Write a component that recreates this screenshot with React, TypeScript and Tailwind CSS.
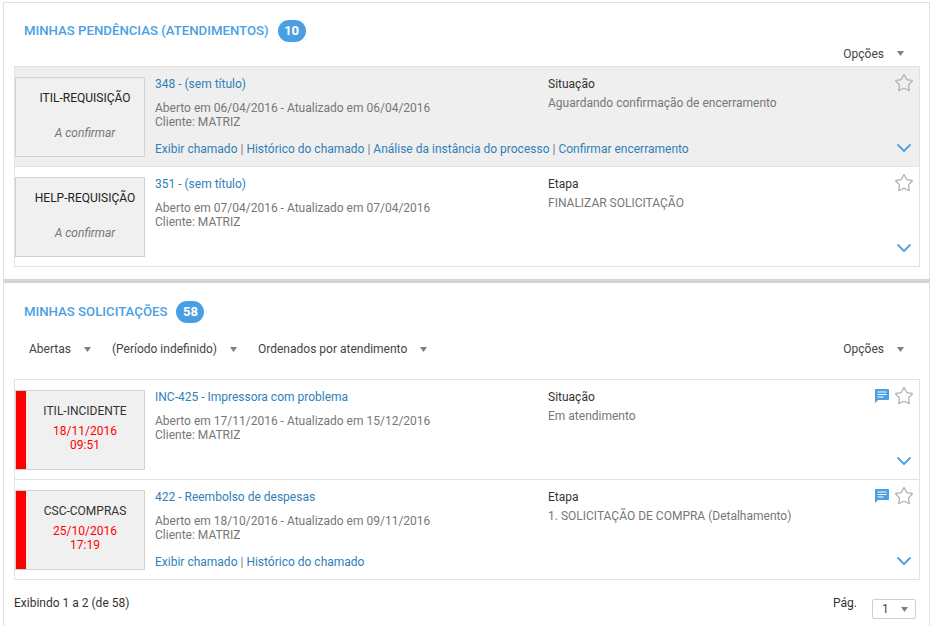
import React from 'react';
import { Star, ChevronDown } from 'lucide-react';

const Caret = () => (
  <svg width="7" height="5" viewBox="0 0 7 5" className="shrink-0">
    <path d="M0 0h7L3.5 5z" fill="#808080" />
  </svg>
);

const Comment = () => (
  <svg width="14" height="14" viewBox="0 0 14 14" className="shrink-0">
    <path d="M0.8 0h12.4a0.8 0.8 0 0 1 0.8 0.8v9.4a0.8 0.8 0 0 1-0.8 0.8H3L0 14V0.8A0.8 0.8 0 0 1 0.8 0z" fill="#4a9fe3" />
    <path d="M2.5 2.5h9v1h-9zM2.5 5h9v1h-9zM2.5 7.5h6v1h-6z" fill="#fff" />
  </svg>
);

const Dropdown = ({ label }: { label: string }) => (
  <div className="flex items-center gap-[13px] text-[#444]">
    <span>{label}</span>
    <Caret />
  </div>
);

type Item = {
  type: string;
  status?: string;
  date?: string;
  time?: string;
  title: string;
  opened: string;
  updated: string;
  label: string;
  value: string;
  links?: string[];
  comment?: boolean;
  highlight?: boolean;
};

const Row = ({ item, last }: { item: Item; last?: boolean }) => (
  <div className={`flex ${item.highlight ? 'bg-[#efefef]' : 'bg-white'} ${last ? 'h-[99px]' : 'h-[100px] border-b border-[#e2e2e2]'}`}>
    <div className="pt-[10px] shrink-0">
      <div className="flex w-[130px] h-[80px] border border-[#d2d2d2] bg-[#f0f0f0]">
        {item.date && <div className="w-[10px] bg-[#ff0000] shrink-0" />}
        <div className={`flex-1 flex flex-col items-center ${item.date ? '' : 'pl-[10px]'}`}>
          {item.date ? (
            <>
              <div className="mt-[12px] text-[#333] leading-[16px]">{item.type}</div>
              <div className="mt-[5px] text-[#ff0000] leading-[14px] text-center">
                {item.date}
                <br />
                {item.time}
              </div>
            </>
          ) : (
            <>
              <div className="mt-[12px] text-[#222] leading-[16px]">{item.type}</div>
              <div className="mt-[19px] text-[#777] italic leading-[16px]">{item.status}</div>
            </>
          )}
        </div>
      </div>
    </div>
    <div className="w-[403px] shrink-0 pl-[10px] flex flex-col pt-[9px]">
      <a className="text-[#2f7fb8] leading-[16px]">{item.title}</a>
      <div className="mt-[9px] text-[#777] leading-[14px]">
        Aberto em {item.opened} - Atualizado em {item.updated}
        <br />
        Cliente: MATRIZ
      </div>
      {item.links && (
        <div className="mt-[12px] text-[#2f7fb8] leading-[16px] whitespace-nowrap">
          {item.links.map((l, i) => (
            <span key={l}>
              {i > 0 && <span className="text-[#777]"> | </span>}
              {l}
            </span>
          ))}
        </div>
      )}
    </div>
    <div className="flex-1 pt-[9px]">
      <div className="text-[#333] leading-[16px]">{item.label}</div>
      <div className="mt-[3px] text-[#777] leading-[16px]">{item.value}</div>
    </div>
    <div className="w-[60px] shrink-0 flex flex-col items-end pr-[5px] pt-[6px] pb-[6px] justify-between">
      <div className="flex items-center gap-[5px]">
        {item.comment && <Comment />}
        <Star size={20} strokeWidth={1.5} color="#b0b0b0" />
      </div>
      <ChevronDown size={24} strokeWidth={1.8} color="#4a9fe3" className="mr-[-2px]" />
    </div>
  </div>
);

const Heading = ({ title, count }: { title: string; count: number }) => (
  <div className="flex items-center gap-[9px] pl-[10px] h-[22px]">
    <h2 className="text-[13.2px] font-medium text-[#4a9fe3]">{title}</h2>
    <span className="w-[28px] h-[22px] rounded-full bg-[#4a9fe3] text-white text-[13px] font-bold flex items-center justify-center">
      {count}
    </span>
  </div>
);

export default function App() {
  return (
    <div className="w-[931px] h-[626px] overflow-hidden bg-white text-[12px] font-['Roboto',sans-serif]">
      <div className="ml-[3px] mr-[1px] mt-[2px] h-[281px] border border-[#e0e0e0] border-b-[4px] border-b-[#d4d4d4] pl-[10px] pr-[9px] pt-[17px]">
        <Heading title="MINHAS PENDÊNCIAS (ATENDIMENTOS)" count={10} />
        <div className="flex justify-end pr-[16px] pb-[1px] h-[24px] items-center">
          <Dropdown label="Opções" />
        </div>
        <div className="border border-[#e2e2e2]">
          <Row
            item={{
              type: 'ITIL-REQUISIÇÃO',
              status: 'A confirmar',
              title: '348 - (sem título)',
              opened: '06/04/2016',
              updated: '06/04/2016',
              label: 'Situação',
              value: 'Aguardando confirmação de encerramento',
              links: ['Exibir chamado', 'Histórico do chamado', 'Análise da instância do processo', 'Confirmar encerramento'],
              highlight: true,
            }}
          />
          <Row
            last
            item={{
              type: 'HELP-REQUISIÇÃO',
              status: 'A confirmar',
              title: '351 - (sem título)',
              opened: '07/04/2016',
              updated: '07/04/2016',
              label: 'Etapa',
              value: 'FINALIZAR SOLICITAÇÃO',
            }}
          />
        </div>
      </div>
      <div className="ml-[3px] mr-[1px] border-x border-[#e0e0e0] h-[343px] pl-[10px] pr-[9px] pt-[18px]">
        <Heading title="MINHAS SOLICITAÇÕES" count={58} />
        <div className="flex justify-between items-center mt-[16px] pl-[15px] pr-[16px] h-[20px]">
          <div className="flex items-center gap-[21px]">
            <Dropdown label="Abertas" />
            <Dropdown label="(Período indefinido)" />
            <Dropdown label="Ordenados por atendimento" />
          </div>
          <Dropdown label="Opções" />
        </div>
        <div className="mt-[20px] border border-[#e2e2e2]">
          <Row
            item={{
              type: 'ITIL-INCIDENTE',
              date: '18/11/2016',
              time: '09:51',
              title: 'INC-425 - Impressora com problema',
              opened: '17/11/2016',
              updated: '15/12/2016',
              label: 'Situação',
              value: 'Em atendimento',
              comment: true,
            }}
          />
          <Row
            last
            item={{
              type: 'CSC-COMPRAS',
              date: '25/10/2016',
              time: '17:19',
              title: '422 - Reembolso de despesas',
              opened: '18/10/2016',
              updated: '09/11/2016',
              label: 'Etapa',
              value: '1. SOLICITAÇÃO DE COMPRA (Detalhamento)',
              links: ['Exibir chamado', 'Histórico do chamado'],
              comment: true,
            }}
          />
        </div>
        <div className="flex justify-between mt-[15px] text-[#333] leading-[16px]">
          <span>Exibindo 1 a 2 (de 58)</span>
          <div className="flex items-start gap-[15px] pr-[4px]">
            <span>Pág.</span>
            <div className="mt-[4px] w-[44px] h-[20px] border border-[#cfcfcf] rounded-[2px] flex items-center justify-between pl-[9px] pr-[7px]">
              <span className="text-[#444]">1</span>
              <Caret />
            </div>
          </div>
        </div>
      </div>
    </div>
  );
}
